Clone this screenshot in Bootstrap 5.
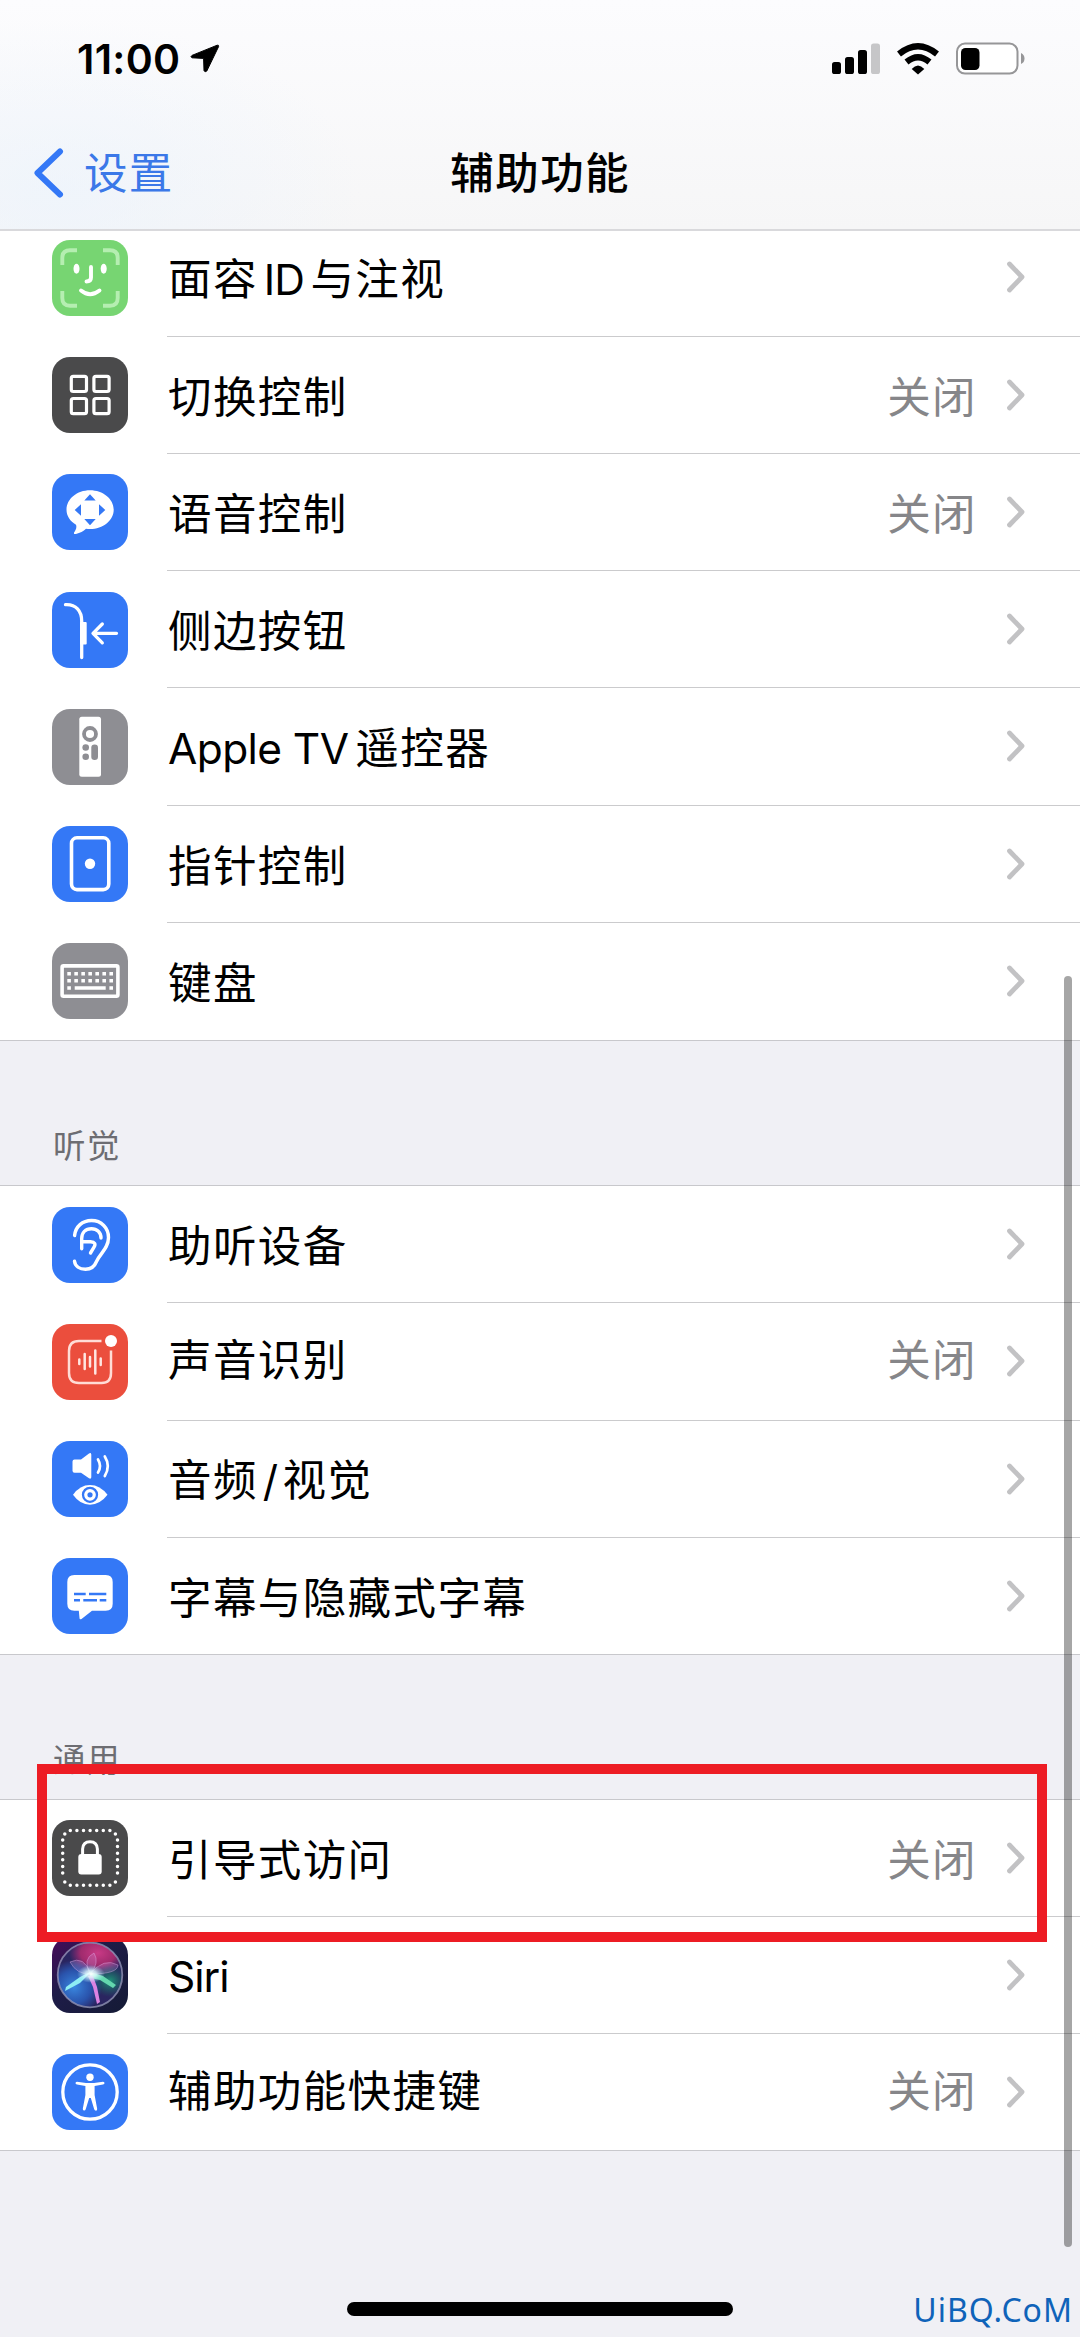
<!DOCTYPE html>
<html lang="zh-CN">
<head>
<meta charset="utf-8">
<meta name="viewport" content="width=device-width, initial-scale=1">
<title>辅助功能</title>
<link href="https://cdn.jsdelivr.net/npm/bootstrap@5.3.0/dist/css/bootstrap.min.css" rel="stylesheet">
<style>
  body { background: #f0f0f5; font-family: Inter, "Noto Sans CJK SC", sans-serif; color: #000; }
  .phone { width: 1080px; height: 2337px; background: #f0f0f5; }
  .topbar { height: 231px; border-bottom: 2px solid #d9d9dc; z-index: 2;
    background: radial-gradient(ellipse 300px 170px at 60px 190px, rgba(234,243,253,.6), rgba(240,246,255,0)), linear-gradient(#fcfcfe, #f6f6f7); }
  .status { height: 116px; padding: 0 55px 0 77px; }
  .clock { font-size: 41px; font-weight: 600; letter-spacing: .3px; line-height: 44px; margin-top: 37px; }
  .arrow { margin: 44px 0 0 10px; }
  .sysicons { margin-top: 41px; }
  .titlebar { height: 113px; padding-left: 32px; }
  .titlebar > div { width: 33.333%; }
  .back { color: #3b78e8; font-size: 43.5px; letter-spacing: 1.2px; line-height: 60px; }
  .back svg { margin-right: 20px; }
  .heading { font-size: 43.5px; font-weight: 500; letter-spacing: 1.4px; line-height: 60px; margin-left: 69px; }
  .group { border-radius: 0; background: #fff; border-bottom: 1px solid #c8c8cc; border-top: 1px solid #c8c8cc; }
  .group.first { margin-top: -11.7px; border-top: 0; }
  .item { height: 117.25px; padding: 0 0 0 52px; border: 0; background: #fff; color: #000; }
  .group:not(.first) .item:last-child { height: 116.25px; }
  .tile { width: 76px; height: 76px; border-radius: 18px; flex: none; overflow: hidden; }
  .tile svg { display: block; }
  .blue { background: #3478f6; } .green { background: #77d572; } .dark { background: #4a4a4b; }
  .grey { background: #8e8e93; } .red { background: #eb4e3d; }
  .line-box { margin-left: 39px; padding: 0 54px 0 1px; border-bottom: 1px solid #cbcbcd; }
  .item:last-child .line-box { border-bottom: 0; }
  .label, .state { font-size: 43.5px; letter-spacing: 1.4px; line-height: 60px; position: relative; top: 2px; }
  .label { white-space: nowrap; }
  .state { color: #868689; margin-right: 29px; }
  .raise { top: -1px; }
  .latin { font-size: 42.5px; letter-spacing: -.6px; }
  .latin.id { margin: 0 6.5px 0 6px; letter-spacing: -1px; }
  .latin.tv { margin-right: 7px; }
  .latin.slash { margin: 0 5px 0 5px; }
  .label.latin.siri { letter-spacing: -1px; }
  .section-name { color: #6d6d72; font-size: 32.5px; letter-spacing: 1.4px; line-height: 44px; padding-left: 53px; }
  .gap-a { height: 144px; padding-top: 84px; }
  .gap-b { height: 143.5px; padding-top: 84px; }
  .marker { left: 37px; top: 1764px; width: 1010px; height: 178px; border: 10px solid #ed1c24; z-index: 3; }
  .thumb { left: 1064px; top: 976px; width: 8px; height: 1271px; border-radius: 4px; background: rgba(0,0,0,.35); z-index: 3; }
  .home { left: 347px; top: 2302px; width: 386px; height: 14px; border-radius: 7px; background: #000; }
  .site { right: 7px; bottom: 5px; color: #0f63b9; font: 32px/44px "Noto Sans", sans-serif; letter-spacing: 1px; }
</style>
<script src="https://cdn.jsdelivr.net/npm/bootstrap@5.3.0/dist/js/bootstrap.bundle.min.js"></script>
</head>
<body class="m-0">
<svg width="0" height="0" class="position-absolute" aria-hidden="true">
  <symbol id="chev" viewBox="0 0 20 34"><path d="M3.5 4 16 17 3.5 30" fill="none" stroke="#c2c2c4" stroke-width="4.8" stroke-linecap="round" stroke-linejoin="round"/></symbol>
</svg>
<main class="phone position-relative overflow-hidden">
  <header class="topbar position-relative">
    <div class="status d-flex align-items-start">
      <span class="clock">11:00</span>
      <svg class="arrow" width="30" height="29" viewBox="0 0 30 29"><path d="M27.2 1.2 2 11.4q-2 1.4 0 2.4l11.600.6.4 12.200q1 2.200 2.800.4L28.600 2.600q.3-1.800-1.400-1.400z" fill="#000" stroke="#000" stroke-width="1" stroke-linejoin="round"/></svg>
      <div class="sysicons ms-auto d-flex">
        <svg width="193" height="36" viewBox="832 41 193 36">
          <rect x="832" y="62" width="9" height="12" rx="2.6"/><rect x="845" y="57" width="9" height="17" rx="2.6"/><rect x="858" y="50" width="9" height="24" rx="2.6"/><rect x="871" y="43.500" width="9" height="30.500" rx="2.600" fill="#c6c6c8"/>
          <g fill="none" stroke="#000" stroke-width="6.200"><path d="M899 54 Q918 38.500 937 54"/><path d="M906.500 62 Q918 52.500 929.500 62"/></g>
          <path d="M911.700 69 Q918 62 924.300 69 L918 74.500z"/>
          <rect x="957" y="43.600" width="60.500" height="30" rx="8" fill="#fff" stroke="#969698" stroke-width="2"/>
          <rect x="961" y="48" width="18.500" height="22" rx="4.500"/><path d="M1021 53q3.500 1.500 3.500 5.500t-3.500 5.500z" fill="#969698"/>
        </svg>
      </div>
    </div>
    <nav class="titlebar d-flex align-items-center">
      <div class="back d-flex align-items-center"><svg width="32" height="52" viewBox="0 0 32 52"><path d="M28 4.500 5.500 26 28 47.500" fill="none" stroke="#3478f6" stroke-width="6" stroke-linecap="round" stroke-linejoin="round"/></svg>设置</div>
      <div class="heading">辅助功能</div>
    </nav>
  </header>

  <div class="group first list-group">
    <div class="item list-group-item d-flex align-items-center">
      <span class="tile green"><svg width="76" height="76" viewBox="0 0 76 76" fill="none" stroke="#fff" stroke-width="3.900" stroke-linecap="round"><g stroke="#b5eeb1" stroke-linecap="butt"><path d="M10.300 25V18q0-7.700 7.700-7.700h7M51 10.300h7q7.700 0 7.700 7.700v7M10.300 51v7q0 7.700 7.700 7.700h7M51 65.700h7q7.700 0 7.700-7.700v-7"/></g><path d="M39 27v10.500q0 4-4.500 4M29 50.500q9 7.500 18.500 0"/><g fill="#fff" stroke="none"><ellipse cx="24.500" cy="28.700" rx="3" ry="5"/><ellipse cx="51.700" cy="28.700" rx="3" ry="5"/></g></svg></span>
      <div class="line-box d-flex align-items-center h-100 flex-grow-1"><span class="label">面容<span class="latin id">ID</span>与注视</span><svg class="ms-auto" width="20" height="34"><use href="#chev"/></svg></div>
    </div>
    <div class="item list-group-item d-flex align-items-center">
      <span class="tile dark"><svg width="76" height="76" viewBox="0 0 76 76" fill="none" stroke="#fff" stroke-width="3.200"><rect x="19.300" y="19.300" width="15.200" height="15.200" rx="2"/><rect x="41.900" y="19.300" width="15.200" height="15.200" rx="2"/><rect x="19.300" y="41.500" width="15.200" height="15.200" rx="2"/><rect x="41.900" y="41.500" width="15.200" height="15.200" rx="2"/></svg></span>
      <div class="line-box d-flex align-items-center h-100 flex-grow-1"><span class="label">切换控制</span><span class="state ms-auto">关闭</span><svg width="20" height="34"><use href="#chev"/></svg></div>
    </div>
    <div class="item list-group-item d-flex align-items-center">
      <span class="tile blue"><svg width="76" height="76" viewBox="0 0 76 76" fill="#fff"><path d="M38 16.300C25 16.300 14.500 25 14.500 35.700c0 6.300 3.700 11.500 9.500 15 1 2.800-.2 5.300-1.800 7.600-.8 1.500.3 2 1.800 1.700 4-.8 7.500-3 10-5.200 1.300.2 2.700.3 4 .3 13 0 23.700-8.700 23.700-19.400S51 16.300 38 16.300z"/><path fill="#3478f6" d="M38 20.300l5.700 6.200H32.300zM38 51.300l5.700-6.200H32.300zM22.700 36l6.300-5.700v11.400zM53.300 36 47 30.300v11.400z"/></svg></span>
      <div class="line-box d-flex align-items-center h-100 flex-grow-1"><span class="label">语音控制</span><span class="state ms-auto">关闭</span><svg width="20" height="34"><use href="#chev"/></svg></div>
    </div>
    <div class="item list-group-item d-flex align-items-center">
      <span class="tile blue"><svg width="76" height="76" viewBox="0 0 76 76" fill="none" stroke="#fff" stroke-width="3.300" stroke-linecap="round" stroke-linejoin="round"><path d="M13.500 12.600C24 12 29.700 19 29.700 29v36.500M41 41.300h23.500M50.300 32 41 41.300l9.300 9.500"/><rect x="28" y="30" width="6.700" height="22.500" rx="1" fill="#fff" stroke="none"/></svg></span>
      <div class="line-box d-flex align-items-center h-100 flex-grow-1"><span class="label">侧边按钮</span><svg class="ms-auto" width="20" height="34"><use href="#chev"/></svg></div>
    </div>
    <div class="item list-group-item d-flex align-items-center">
      <span class="tile grey"><svg width="76" height="76" viewBox="0 0 76 76" fill="#8e8e93"><rect x="27.300" y="7.700" width="21.700" height="60" rx="2.500" fill="#fff"/><circle cx="38" cy="25" r="6" fill="none" stroke="#8e8e93" stroke-width="3.800"/><circle cx="33.700" cy="38.500" r="3.300"/><circle cx="33.700" cy="47.700" r="3.300"/><rect x="39.300" y="35.500" width="6.700" height="15.500" rx="3.300"/></svg></span>
      <div class="line-box d-flex align-items-center h-100 flex-grow-1"><span class="label"><span class="latin tv">Apple TV</span>遥控器</span><svg class="ms-auto" width="20" height="34"><use href="#chev"/></svg></div>
    </div>
    <div class="item list-group-item d-flex align-items-center">
      <span class="tile blue"><svg width="76" height="76" viewBox="0 0 76 76"><rect x="19.500" y="11.800" width="37.300" height="51.800" rx="5.500" fill="none" stroke="#fff" stroke-width="3.600"/><circle cx="38" cy="37.700" r="5.200" fill="#fff"/></svg></span>
      <div class="line-box d-flex align-items-center h-100 flex-grow-1"><span class="label">指针控制</span><svg class="ms-auto" width="20" height="34"><use href="#chev"/></svg></div>
    </div>
    <div class="item list-group-item d-flex align-items-center">
      <span class="tile grey"><svg width="76" height="76" viewBox="0 0 76 76" fill="none" stroke="#fff" stroke-width="3.600"><rect x="10.100" y="22.900" width="55.800" height="30.300" rx="1.500"/><path stroke-dasharray="3.600 3.420" d="M15.300 30.700h46M15.300 37.700h46"/><path d="M15.300 45h3.600M57.400 45H61M22.700 45h31"/></svg></span>
      <div class="line-box d-flex align-items-center h-100 flex-grow-1"><span class="label">键盘</span><svg class="ms-auto" width="20" height="34"><use href="#chev"/></svg></div>
    </div>
  </div>

  <div class="section-name gap-a">听觉</div>

  <div class="group list-group">
    <div class="item list-group-item d-flex align-items-center">
      <span class="tile blue"><svg width="76" height="76" viewBox="0 0 76 76" fill="none" stroke="#fff" stroke-width="3.400" stroke-linecap="round" stroke-linejoin="round"><path d="M22.600 28.500C23.500 19.500 30.500 13.500 39.500 13.500c10 0 17 7.500 17 17 0 11-8.500 16-12 24-2 5-5.500 7.800-11 7.800-6 0-10.300-3-11-8"/><path d="M49 31c0-5.500-4-9.300-9.500-9.300-6 0-9.800 4-9.800 9.800v10.300M30 34.700h8.500q6.500.5 3.500 5.500L38.500 46"/></svg></span>
      <div class="line-box d-flex align-items-center h-100 flex-grow-1"><span class="label">助听设备</span><svg class="ms-auto" width="20" height="34"><use href="#chev"/></svg></div>
    </div>
    <div class="item list-group-item d-flex align-items-center">
      <span class="tile red"><svg width="76" height="76" viewBox="0 0 76 76" fill="none" stroke="#fff" stroke-width="2.500" stroke-linecap="round"><path stroke="#ffdcd6" stroke-linecap="butt" d="M49.500 17H27q-10 0-10 10v22q0 10 10 10h22.500q9.500 0 9.500-10V26.500"/><circle cx="59" cy="17" r="6" fill="#fff" stroke="none"/><path stroke="#ffe6e1" d="M27.300 35.500v4.500M32.700 30v15M38 33v9.500M43.300 26.500v23M48.700 34.500v6.500"/></svg></span>
      <div class="line-box d-flex align-items-center h-100 flex-grow-1"><span class="label raise">声音识别</span><span class="state raise ms-auto">关闭</span><svg width="20" height="34"><use href="#chev"/></svg></div>
    </div>
    <div class="item list-group-item d-flex align-items-center">
      <span class="tile blue"><svg width="76" height="76" viewBox="0 0 76 76" fill="#fff"><path d="M22.500 18.500H29l8-6q2-1.200 2.300 1v22.800q-.3 2.200-2.300 1l-8-5.600h-6.500q-2-.2-2-2V20.500q0-2 2-2z"/><path fill="none" stroke="#fff" stroke-width="2.700" stroke-linecap="round" d="M46 18.500q4 6.500 0 13M52.800 15.500q6 9.500 0 19.500"/><path d="M21 53.800Q28 44 38 44t17.500 9.800Q48 63.700 38 63.700T21 53.800z"/><circle cx="38" cy="53.800" r="7" fill="none" stroke="#3478f6" stroke-width="2.300"/><circle cx="38" cy="53.800" r="2.600" fill="#3478f6"/></svg></span>
      <div class="line-box d-flex align-items-center h-100 flex-grow-1"><span class="label">音频<span class="latin slash">/</span>视觉</span><svg class="ms-auto" width="20" height="34"><use href="#chev"/></svg></div>
    </div>
    <div class="item list-group-item d-flex align-items-center">
      <span class="tile blue"><svg width="76" height="76" viewBox="0 0 76 76" fill="#fff"><path d="M22.300 17h31.400q7 0 7 7v21.700q0 7-7 7H40l-10.500 8.200q-2 1-2-1l-.7-7.200h-4.500q-7 0-7-7V24q0-7 7-7z"/><path fill="none" stroke="#3478f6" stroke-width="2.500" d="M22 36h11.700M37 36h17.300M22 42.300h6M31.300 42.300H45M47.700 42.300h6.600"/></svg></span>
      <div class="line-box d-flex align-items-center h-100 flex-grow-1"><span class="label">字幕与隐藏式字幕</span><svg class="ms-auto" width="20" height="34"><use href="#chev"/></svg></div>
    </div>
  </div>

  <div class="section-name gap-b">通用</div>

  <div class="group list-group">
    <div class="item list-group-item d-flex align-items-center">
      <span class="tile dark"><svg width="76" height="76" viewBox="0 0 76 76" fill="#fff"><path fill="none" stroke="#fff" stroke-width="3.500" stroke-linecap="round" stroke-dasharray="0 6.600" d="M18.300 10.500H59M18.300 65.300H59M10.700 20v36.500M65.500 20v36.500"/><circle cx="12.800" cy="14" r="1.750"/><circle cx="63.400" cy="14" r="1.750"/><circle cx="12.800" cy="62" r="1.750"/><circle cx="63.400" cy="62" r="1.750"/><rect x="26.300" y="34" width="23.400" height="20.500" rx="3"/><path fill="none" stroke="#fff" stroke-width="3" d="M30.600 35v-6q.4-7.300 7.400-7.300t7.400 7.300v6"/></svg></span>
      <div class="line-box d-flex align-items-center h-100 flex-grow-1"><span class="label">引导式访问</span><span class="state ms-auto">关闭</span><svg width="20" height="34"><use href="#chev"/></svg></div>
    </div>
    <div class="item list-group-item d-flex align-items-center">
      <span class="tile"><svg width="76" height="76" viewBox="0 0 76 76">
        <defs>
          <linearGradient id="sbg" x1="0" y1="0" x2="1" y2="1"><stop offset="0" stop-color="#4a0a5c"/><stop offset=".4" stop-color="#1e1c48"/><stop offset="1" stop-color="#141a35"/></linearGradient>
          <radialGradient id="sp"><stop offset="0" stop-color="#c93a86"/><stop offset=".6" stop-color="#b52c70" stop-opacity=".85"/><stop offset="1" stop-color="#a02a7c" stop-opacity="0"/></radialGradient>
          <radialGradient id="sb"><stop offset="0" stop-color="#3a88e0"/><stop offset=".6" stop-color="#2a5cba" stop-opacity=".85"/><stop offset="1" stop-color="#2a5fc4" stop-opacity="0"/></radialGradient>
          <radialGradient id="sg"><stop offset="0" stop-color="#1f9478"/><stop offset="1" stop-color="#147060" stop-opacity="0"/></radialGradient>
          <radialGradient id="sw"><stop offset="0" stop-color="#fff"/><stop offset=".4" stop-color="#dffcff" stop-opacity=".8"/><stop offset="1" stop-color="#b0e8ff" stop-opacity="0"/></radialGradient>
          <clipPath id="sc"><circle cx="38" cy="38" r="32"/></clipPath>
          <filter id="soft"><feGaussianBlur stdDeviation=".7"/></filter>
        </defs>
        <rect width="76" height="76" fill="url(#sbg)"/>
        <g clip-path="url(#sc)"><circle cx="38" cy="38" r="32" fill="#2a2560"/><ellipse cx="46" cy="16" rx="29" ry="20" fill="url(#sp)"/><ellipse cx="22" cy="50" rx="28" ry="27" fill="url(#sb)"/><ellipse cx="58" cy="44" rx="18" ry="16" fill="url(#sg)"/>
          <g fill="#d7a4ee" fill-opacity=".22" stroke="#e6b4f0" stroke-opacity=".5" stroke-width=".8"><path d="M18 25q14-7 21 12Q25 38 18 25z"/><path d="M38 37Q30 22 42 16q6 10-4 21z"/><path d="M38 37q14-17 28-9 0 9-28 9z"/></g>
          <g filter="url(#soft)"><path d="M40 34 28 46 13 54l1-4 14-10z" fill="#8eeef4"/><path d="M38 35l13 4 13 9-3 3-13-8-10-2z" fill="#64d8ae"/><path d="M36 39l5 11 4 17 3-2-3-15-4-11z" fill="#dc82e2"/></g>
          <ellipse cx="39" cy="37" rx="14" ry="9" fill="url(#sw)"/>
        </g>
        <circle cx="38" cy="38" r="32.300" fill="none" stroke="#a2a5c8" stroke-opacity=".7" stroke-width="1.800"/>
      </svg></span>
      <div class="line-box d-flex align-items-center h-100 flex-grow-1"><span class="label latin siri">Siri</span><svg class="ms-auto" width="20" height="34"><use href="#chev"/></svg></div>
    </div>
    <div class="item list-group-item d-flex align-items-center">
      <span class="tile blue"><svg width="76" height="76" viewBox="0 0 76 76" fill="#fff"><circle cx="38" cy="38" r="27.200" fill="none" stroke="#fff" stroke-width="3.300"/><circle cx="38" cy="23.300" r="3.700"/><path d="M25 27.700l9 1.300h8l9-1.300q1.700.1 1.500 1.600-.1 1-1.500 1.300l-8.400 1.400v9l2.600 14q0 1.500-1.200 1.700-1.300 0-1.800-1.400L38.800 44h-1.600l-3.500 11.300q-.5 1.400-1.800 1.200-1.200-.3-1.100-1.700L33.400 41v-9L25 30.600q-1.400-.3-1.500-1.300-.1-1.500 1.500-1.600z"/></svg></span>
      <div class="line-box d-flex align-items-center h-100 flex-grow-1"><span class="label raise">辅助功能快捷键</span><span class="state raise ms-auto">关闭</span><svg width="20" height="34"><use href="#chev"/></svg></div>
    </div>
  </div>

  <div class="marker position-absolute"></div>
  <div class="thumb position-absolute"></div>
  <div class="home position-absolute"></div>
  <div class="site position-absolute">UiBQ.CoM</div>
</main>
</body>
</html>
